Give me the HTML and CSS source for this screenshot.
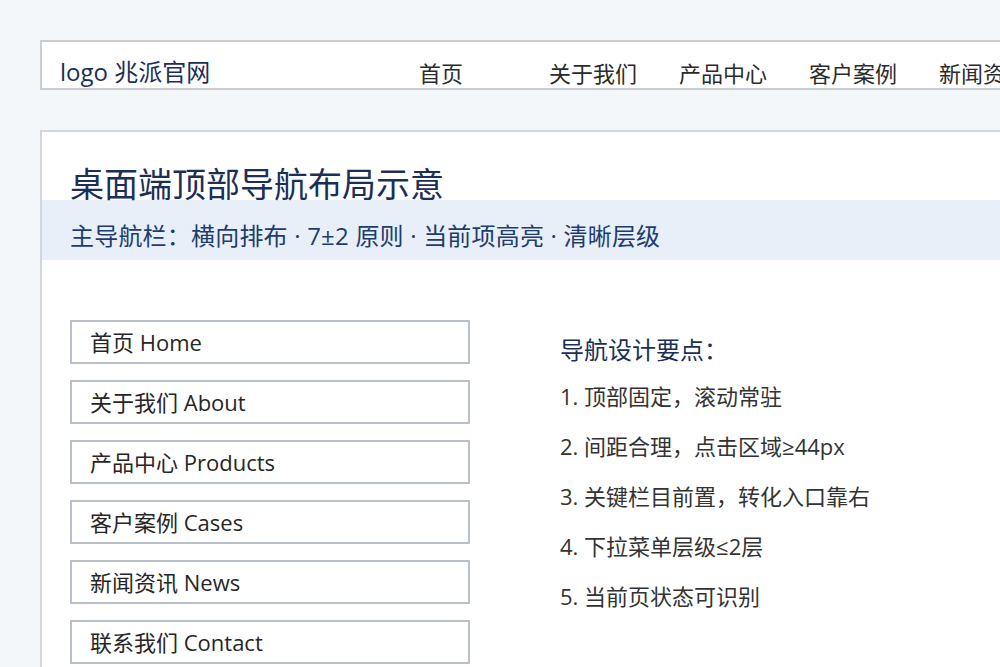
FILE: index.html
```html
<!DOCTYPE html>
<html lang="zh-CN">
<head>
<meta charset="utf-8">
<title>桌面端顶部导航布局示意</title>
<link rel="stylesheet" href="styles.css">
</head>
<body>
<div class="page">
  <header class="topnav">
    <div class="logo">logo 兆派官网</div>
    <nav class="menu">
      <span class="menu-item">首页</span>
      <span class="menu-item">关于我们</span>
      <span class="menu-item">产品中心</span>
      <span class="menu-item">客户案例</span>
      <span class="menu-item">新闻资讯</span>
      <span class="menu-item">联系我们</span>
    </nav>
  </header>

  <section class="card">
    <h1 class="title">桌面端顶部导航布局示意</h1>
    <div class="band">主导航栏：横向排布 · 7±2 原则 · 当前项高亮 · 清晰层级</div>
    <div class="content">
      <ul class="nav-list">
        <li class="nav-box">首页 Home</li>
        <li class="nav-box">关于我们 About</li>
        <li class="nav-box">产品中心 Products</li>
        <li class="nav-box">客户案例 Cases</li>
        <li class="nav-box">新闻资讯 News</li>
        <li class="nav-box">联系我们 Contact</li>
      </ul>
      <div class="points">
        <h2 class="points-title">导航设计要点：</h2>
        <ol class="points-list">
          <li>1. 顶部固定，滚动常驻</li>
          <li>2. 间距合理，点击区域≥44px</li>
          <li>3. 关键栏目前置，转化入口靠右</li>
          <li>4. 下拉菜单层级≤2层</li>
          <li>5. 当前页状态可识别</li>
        </ol>
      </div>
    </div>
  </section>
</div>
</body>
</html>
```

FILE: styles.css
```css
html, body {
  margin: 0;
  padding: 0;
  width: 1000px;
  height: 667px;
  overflow: hidden;
  background: #f4f7fa;
  font-family: "Segoe UI", "Open Sans", "Noto Sans CJK SC", sans-serif;
}

.page {
  padding: 40px 0 0 40px;
  width: 1200px;
}

.topnav {
  display: flex;
  box-sizing: border-box;
  width: 1160px;
  height: 50px;
  background: #ffffff;
  border: 2px solid #c9ced5;
  padding: 15px 0 0 18px;
  overflow: hidden;
}

.logo {
  flex-shrink: 0;
  font-size: 24px;
  line-height: 30px;
  color: #1b2f57;
  width: 359px;
  white-space: nowrap;
}

.menu {
  display: flex;
  flex-shrink: 0;
}

.menu-item {
  width: 130px;
  flex-shrink: 0;
  font-size: 22px;
  line-height: 32px;
  color: #2b2b2b;
  white-space: nowrap;
}

.card {
  box-sizing: border-box;
  width: 1160px;
  margin-top: 40px;
  background: #ffffff;
  border-top: 2px solid #d3d7dc;
  border-left: 2px solid #d3d7dc;
  height: 600px;
}

.title {
  margin: 0;
  padding: 34px 0 0 28px;
  height: 34px;
  font-size: 34px;
  line-height: 36px;
  font-weight: normal;
  color: #1b2f57;
  white-space: nowrap;
}

.band {
  box-sizing: border-box;
  height: 60px;
  background: #e8eff8;
  padding: 12px 0 0 28px;
  font-size: 24px;
  line-height: 48px;
  letter-spacing: 0.2px;
  color: #1e3d6e;
  white-space: nowrap;
}

.content {
  display: flex;
  gap: 90px;
  padding: 60px 0 0 28px;
}

.nav-list {
  list-style: none;
  margin: 0;
  padding: 0;
  display: flex;
  flex-direction: column;
  gap: 16px;
  width: 400px;
  flex-shrink: 0;
}

.nav-box {
  box-sizing: border-box;
  height: 44px;
  border: 2px solid #b9c0c9;
  padding-left: 18px;
  font-size: 22px;
  line-height: 40px;
  color: #262626;
  white-space: nowrap;
}

.points {
  padding-top: 15px;
}

.points-title {
  margin: 0;
  font-size: 24px;
  line-height: 30px;
  font-weight: normal;
  color: #1b2f57;
}

.points-list {
  list-style: none;
  margin: 6px 0 0 0;
  padding: 0;
}

.points-list li {
  font-size: 22px;
  line-height: 50px;
  color: #333333;
  white-space: nowrap;
}
```
